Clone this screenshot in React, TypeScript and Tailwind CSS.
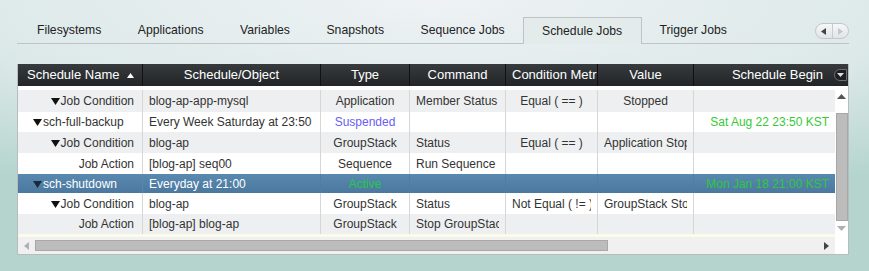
import React from 'react';

type Cell = { text: string; color?: string };
type Row = {
  name: string;
  level: 1 | 2;
  expander: boolean;
  h: number;
  grey?: boolean;
  selected?: boolean;
  cells: Cell[];
};

const cols = [
  { w: 126, align: 'text-left' },
  { w: 178, align: 'text-left' },
  { w: 89, align: 'text-center' },
  { w: 96, align: 'text-left' },
  { w: 92, align: 'text-center' },
  { w: 96, align: 'text-center' },
  { w: 141, align: 'text-right' },
];

const rows: Row[] = [
  {
    name: 'Job Condition', level: 2, expander: true, h: 22, grey: true,
    cells: [{ text: 'blog-ap-app-mysql' }, { text: 'Application' }, { text: 'Member Status' }, { text: 'Equal ( == )' }, { text: 'Stopped' }, { text: '' }],
  },
  {
    name: 'sch-full-backup', level: 1, expander: true, h: 20,
    cells: [{ text: 'Every Week Saturday at 23:50' }, { text: 'Suspended', color: 'text-[#6a5cf5]' }, { text: '' }, { text: '' }, { text: '' }, { text: 'Sat Aug 22 23:50 KST', color: 'text-[#36c936]' }],
  },
  {
    name: 'Job Condition', level: 2, expander: true, h: 21, grey: true,
    cells: [{ text: 'blog-ap' }, { text: 'GroupStack' }, { text: 'Status' }, { text: 'Equal ( == )' }, { text: 'Application Stopped' }, { text: '' }],
  },
  {
    name: 'Job Action', level: 2, expander: false, h: 21,
    cells: [{ text: '[blog-ap] seq00' }, { text: 'Sequence' }, { text: 'Run Sequence' }, { text: '' }, { text: '' }, { text: '' }],
  },
  {
    name: 'sch-shutdown', level: 1, expander: true, h: 19, selected: true,
    cells: [{ text: 'Everyday at 21:00' }, { text: 'Active', color: 'text-[#22cc44]' }, { text: '' }, { text: '' }, { text: '' }, { text: 'Mon Jan 18 21:00 KST', color: 'text-[#2ec840]' }],
  },
  {
    name: 'Job Condition', level: 2, expander: true, h: 21,
    cells: [{ text: 'blog-ap' }, { text: 'GroupStack' }, { text: 'Status' }, { text: 'Not Equal ( != )' }, { text: 'GroupStack Stopped' }, { text: '' }],
  },
  {
    name: 'Job Action', level: 2, expander: false, h: 20, grey: true,
    cells: [{ text: '[blog-ap] blog-ap' }, { text: 'GroupStack' }, { text: 'Stop GroupStack' }, { text: '' }, { text: '' }, { text: '' }],
  },
];

const tabs = ['Filesystems', 'Applications', 'Variables', 'Snapshots', 'Sequence Jobs', 'Schedule Jobs', 'Trigger Jobs'];

function Caret({ color = '#111' }: { color?: string }) {
  return (
    <svg width="9" height="7" viewBox="0 0 9 7" className="inline-block mr-[1px] mb-[-1px]">
      <path d="M0 0 L9 0 L4.5 7 Z" fill={color} />
    </svg>
  );
}

function TreeRow({ row }: { row: Row }) {
  const bg = row.selected
    ? 'bg-gradient-to-b from-[#5a89b0] to-[#4a789f] text-white'
    : row.grey
      ? 'bg-[#eeeff0] text-[#333]'
      : 'bg-white text-[#333]';
  return (
    <div className={`flex ${bg}`} style={{ height: row.h }}>
      <div
        className={`shrink-0 flex items-center whitespace-nowrap overflow-hidden border-r ${row.selected ? 'border-[#5a87ad]' : 'border-[#d6d6d6]'} ${row.level === 1 ? 'pl-[15px]' : 'justify-end pr-[8px]'}`}
        style={{ width: cols[0].w - 1 }}
      >
        {row.expander && <Caret color={row.selected ? '#1a2a3a' : '#111'} />}
        <span>{row.name}</span>
      </div>
      {row.cells.map((c, i) => (
        <div
          key={i}
          className={`shrink-0 flex items-center px-[6px] overflow-hidden whitespace-nowrap ${i < 5 ? (row.selected ? 'border-r border-[#4f7da4]' : 'border-r border-[#d6d6d6]') : ''}`}
          style={{ width: cols[i + 1].w }}
        >
          <span className={`block w-full overflow-hidden ${cols[i + 1].align} ${c.color ?? ''}`}>{c.text}</span>
        </div>
      ))}
    </div>
  );
}

export default function App() {
  return (
    <div className="w-[869px] h-[271px] overflow-hidden bg-[radial-gradient(ellipse_120%_95%_at_50%_0%,#eef2f4_0%,#dde9e9_45%,#b4d4cd_80%)] font-['Liberation_Sans',Arial,sans-serif] text-[12px] text-[#333]">
      <div className="pl-[17px] w-[849px]">
        {/* tabs */}
        <div className="mt-[17px] h-[27px] flex items-end border-b border-[#bfc3c5]">
          <div className="flex h-[26px] pl-[2px]">
            {tabs.map(t => (
              <div
                key={t}
                className={`h-[26px] flex items-center pl-[18px] pr-[18.5px] leading-none pt-[1px] text-[12.2px] ${t === 'Schedule Jobs' ? 'border border-b-0 border-[#bfc3c5] mb-[-1px] h-[27px] bg-[#e3eceb] text-[#222]' : 'text-[#222]'}`}
              >
                {t}
              </div>
            ))}
          </div>
          <div className="ml-auto mb-[4px] flex h-[16px] w-[34px] rounded-full border border-[#c3c7c9] bg-gradient-to-b from-[#f6f7f8] to-[#e2e5e7]">
            <div className="flex-1 flex items-center justify-center border-r border-[#c8cbcd]">
              <svg width="5" height="7" viewBox="0 0 5 7"><path d="M5 0 L0 3.5 L5 7 Z" fill="#444" /></svg>
            </div>
            <div className="flex-1 flex items-center justify-center">
              <svg width="5" height="7" viewBox="0 0 5 7"><path d="M0 0 L5 3.5 L0 7 Z" fill="#c4c7c9" /></svg>
            </div>
          </div>
        </div>

        {/* grid */}
        <div className="mt-[20px] border-l border-r border-b border-[#b9bcbe] bg-white">
          <div className="flex h-[22px] bg-gradient-to-b from-[#383b3e] to-[#222528] text-white text-[13px]">
            <div className="shrink-0 flex items-center pl-[9px] pr-[8px] border-r border-[#111]" style={{ width: cols[0].w - 1 }}>
              <span className="flex-1">Schedule Name</span>
              <svg width="7" height="5" viewBox="0 0 7 5"><path d="M0 5 L3.5 0 L7 5 Z" fill="#fff" /></svg>
            </div>
            {['Schedule/Object', 'Type', 'Command'].map((h, i) => (
              <div key={h} className="shrink-0 flex items-center justify-center border-r border-[#111]" style={{ width: cols[i + 1].w }}>{h}</div>
            ))}
            <div className="shrink-0 flex items-center pl-[6px] overflow-hidden whitespace-nowrap border-r border-[#111]" style={{ width: cols[4].w }}>Condition Metric</div>
            <div className="shrink-0 flex items-center justify-center border-r border-[#111]" style={{ width: cols[5].w }}>Value</div>
            <div className="flex-1 flex items-center justify-end pr-[1px]">
              <span className="mr-[11px]">Schedule Begin</span>
              <div className="w-[13px] h-[12px] rounded-l-full rounded-r-[2px] border border-[#6a6d70] bg-[#1c1e20] flex items-center justify-center">
                <svg width="7" height="4" viewBox="0 0 7 4"><path d="M0 0 L7 0 L3.5 4 Z" fill="#ddd" /></svg>
              </div>
            </div>
          </div>

          <div className="flex h-[151px]">
            <div className="flex-1 flex flex-col overflow-hidden">
              <div className="h-[4px] shrink-0 bg-white" />
              {rows.map((r, i) => <TreeRow key={i} row={r} />)}
              <div className="flex-1 bg-[#fbfbe9]" />
            </div>
            <div className="w-[13px] shrink-0 flex flex-col items-center bg-white">
              <div className="h-[20px] flex items-center">
                <svg width="9" height="5" viewBox="0 0 9 5"><path d="M0 5 L4.5 0 L9 5 Z" fill="#555" /></svg>
              </div>
              <div className="mt-[7px] h-[108px] w-[12px] bg-[#bcbcbc] border border-[#a8a8a8]" />
              <div className="mt-[5px] flex items-center">
                <svg width="9" height="5" viewBox="0 0 9 5"><path d="M0 0 L9 0 L4.5 5 Z" fill="#b0b0b0" /></svg>
              </div>
            </div>
          </div>

          <div className="flex h-[17px]">
            <div className="flex-1 flex items-center bg-[#f0f0f0]">
              <div className="w-[17px] flex justify-center">
                <svg width="5" height="8" viewBox="0 0 5 8"><path d="M5 0 L0 4 L5 8 Z" fill="#b0b0b0" /></svg>
              </div>
              <div className="h-[11px] w-[573px] bg-[#bcbcbc] border border-[#a8a8a8]" />
              <div className="ml-auto w-[17px] flex justify-center">
                <svg width="5" height="8" viewBox="0 0 5 8"><path d="M0 0 L5 4 L0 8 Z" fill="#444" /></svg>
              </div>
            </div>
            <div className="w-[13px] bg-white" />
          </div>
        </div>
      </div>
    </div>
  );
}
